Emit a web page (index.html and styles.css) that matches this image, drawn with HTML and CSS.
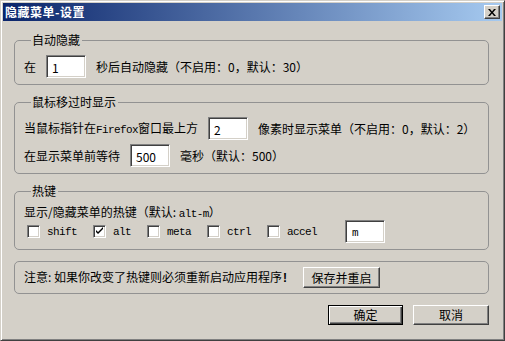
FILE: index.html
```html
<!DOCTYPE html>
<html lang="zh-CN">
<head>
    <meta charset="UTF-8">
    <title>隐藏菜单-设置</title>
    <link rel="stylesheet" href="styles.css">
</head>
<body>
    <div class="window">
        <div class="titlebar">
            <span class="title">隐藏菜单-设置</span>
            <span class="close-btn">
                <svg width="8" height="7" viewBox="0 0 8 7"><path d="M0 0h2l2 2.5L6 0h2L5 3.5 8 7H6L4 4.5 2 7H0l3-3.5z" fill="#000"/></svg>
            </span>
        </div>

        <div class="content">
            <fieldset class="group">
                <legend>自动隐藏</legend>
                <div class="row">
                    <span class="lbl">在</span>
                    <span class="field w40">1</span>
                    <span class="lbl">秒后自动隐藏（不启用：0，默认：30）</span>
                </div>
            </fieldset>

            <fieldset class="group">
                <legend>鼠标移过时显示</legend>
                <div class="row">
                    <span class="lbl">当鼠标指针在<span class="mono">Firefox</span>窗口最上方</span>
                    <span class="field w40">2</span>
                    <span class="lbl">像素时显示菜单（不启用：0，默认：2）</span>
                </div>
                <div class="row second">
                    <span class="lbl">在显示菜单前等待</span>
                    <span class="field w40">500</span>
                    <span class="lbl">毫秒（默认：500）</span>
                </div>
            </fieldset>

            <fieldset class="group">
                <legend>热键</legend>
                <div class="hint">显示/隐藏菜单的热键（默认: <span class="mono">alt-m</span>）</div>
                <div class="row keys">
                    <label class="check"><span class="box"></span><span class="mono">shift</span></label>
                    <label class="check"><span class="box">
                        <svg width="9" height="9" viewBox="0 0 9 9"><path d="M1 3v2l2 2 5-5V0L3 5z" fill="#000"/></svg>
                    </span><span class="mono">alt</span></label>
                    <label class="check"><span class="box"></span><span class="mono">meta</span></label>
                    <label class="check"><span class="box"></span><span class="mono">ctrl</span></label>
                    <label class="check"><span class="box"></span><span class="mono">accel</span></label>
                    <span class="field w40 key mono">m</span>
                </div>
            </fieldset>

            <fieldset class="group notice">
                <div class="row">
                    <span class="lbl">注意: 如果你改变了热键则必须重新启动应用程序<b class="bang">!</b></span>
                    <span class="btn restart">保存并重启</span>
                </div>
            </fieldset>

            <div class="actions">
                <span class="btn default">确定</span>
                <span class="btn">取消</span>
            </div>
        </div>
    </div>
</body>
</html>
```

FILE: styles.css
```css
:root {
    --face: #d4d0c8;
    --shadow: #808080;
    --dark: #404040;
    --light: #ffffff;
    --group-line: #929292;
}

* {
    margin: 0;
    padding: 0;
    box-sizing: border-box;
}

body {
    background: var(--face);
    font-family: "Noto Sans CJK SC", sans-serif;
    font-size: 12px;
    line-height: 12px;
    color: #000;
}

.mono {
    font-family: "Liberation Mono", "DejaVu Sans Mono", monospace;
    font-size: 11px;
    letter-spacing: -0.6px;
}

.bang {
    font-family: "Liberation Sans", sans-serif;
    font-weight: bold;
    margin-left: 1px;
}

.window {
    width: 505px;
    height: 341px;
    background: var(--face);
    border: 1px solid;
    border-color: var(--face) var(--dark) var(--dark) var(--face);
    box-shadow: inset 1px 1px 0 var(--light), inset -1px -1px 0 var(--shadow);
    padding: 2px;
    display: flex;
    flex-direction: column;
}

.titlebar {
    height: 18px;
    background: linear-gradient(to right, #0a246a, #a6caf0);
    display: flex;
    align-items: center;
    justify-content: space-between;
    padding: 0 2px 0 2px;
}

.title {
    color: #fff;
    font-weight: bold;
    font-size: 12px;
    letter-spacing: 0.5px;
}

.close-btn {
    width: 16px;
    height: 14px;
    background: var(--face);
    border: 1px solid;
    border-color: var(--light) var(--dark) var(--dark) var(--light);
    box-shadow: inset -1px -1px 0 var(--shadow);
    display: flex;
    align-items: center;
    justify-content: center;
}

.content {
    padding: 13px 13px 0 11px;
    display: flex;
    flex-direction: column;
    gap: 11px;
}

.group {
    border: 1px solid var(--group-line);
    border-radius: 5px;
    padding: 9px 9px 6px 9px;
    min-width: 0;
}

.group legend {
    margin-left: 7px;
    padding: 0 2px 0 1px;
    line-height: 12px;
    height: 12px;
}

.row {
    display: flex;
    align-items: center;
    height: 23px;
}

.row.second {
    margin-top: 4px;
}

.lbl {
    white-space: nowrap;
}

.field {
    height: 23px;
    background: #fff;
    border: 1px solid;
    border-color: var(--shadow) var(--light) var(--light) var(--shadow);
    box-shadow: inset 1px 1px 0 var(--dark), inset -1px -1px 0 var(--face);
    padding: 2px 0 0 5px;
    display: flex;
    align-items: center;
    margin: 0 10px;
}

.w40 {
    width: 40px;
}

.hint {
    line-height: 12px;
    height: 12px;
}

.row.keys {
    margin-top: 2px;
}

.check {
    display: flex;
    align-items: center;
    margin-left: 3px;
}

.check + .check {
    margin-left: 16px;
}

.box {
    width: 13px;
    height: 13px;
    background: #fff;
    border: 1px solid;
    border-color: var(--shadow) var(--light) var(--light) var(--shadow);
    box-shadow: inset 1px 1px 0 var(--dark), inset -1px -1px 0 var(--face);
    display: flex;
    align-items: center;
    justify-content: center;
    margin-right: 7px;
}

.field.key {
    margin-left: 28px;
    padding-left: 6px;
}

.notice {
    padding: 5px 9px 5px 9px;
}

.notice .row {
    height: 21px;
}

.btn {
    height: 21px;
    background: var(--face);
    border: 1px solid;
    border-color: var(--light) var(--dark) var(--dark) var(--light);
    box-shadow: inset -1px -1px 0 var(--shadow);
    display: flex;
    align-items: center;
    justify-content: center;
    font-size: 12px;
}

.restart {
    width: 77px;
    margin-left: 16px;
}

.actions {
    display: flex;
    justify-content: flex-end;
    gap: 10px;
}

.actions .btn {
    width: 76px;
    height: 20px;
}

.actions .btn.default {
    width: 75px;
    border: 1px solid #000;
    box-shadow: inset 1px 1px 0 var(--light), inset -1px -1px 0 var(--dark), inset -2px -2px 0 var(--shadow);
}
```
